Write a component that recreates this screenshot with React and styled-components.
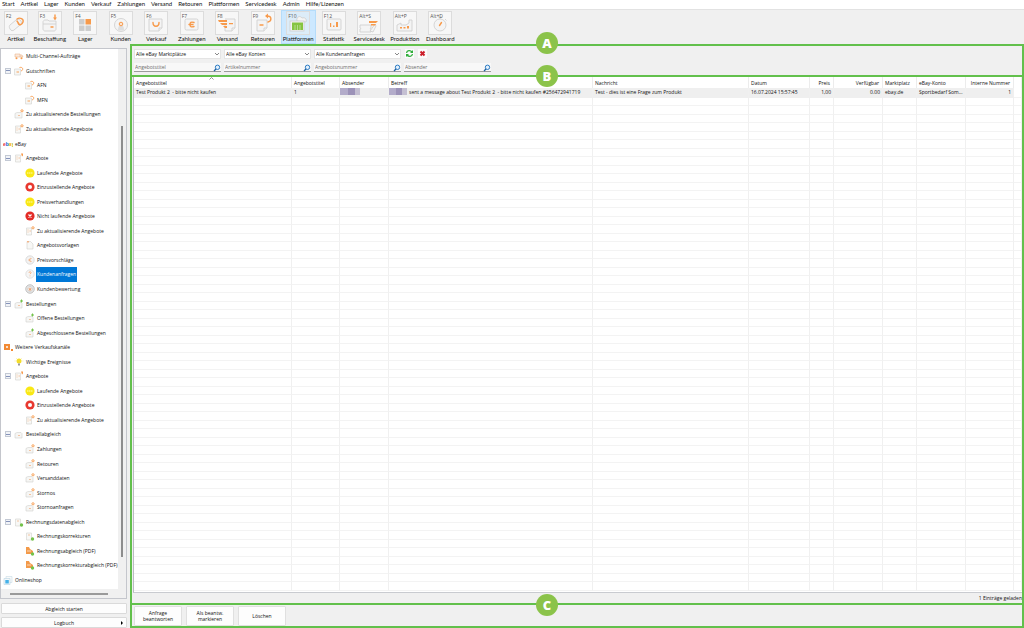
import React, { useState } from 'react';
import styled, { createGlobalStyle, css } from 'styled-components';

const GREEN = '#62c04c';
const ORANGE = '#f79a4b';

const GlobalStyle = createGlobalStyle`
    * {
        box-sizing: border-box;
    }

    html, body, #root {
        height: 100%;
        margin: 0;
    }

    body {
        background-color: #f0f0f0;
        color: #111;
        font-family: 'Open Sans', sans-serif;
        font-size: 5px;
        line-height: 8px;
        overflow: hidden;
    }

    button, input, select {
        font: inherit;
        color: inherit;
        margin: 0;
        padding: 0;
    }
`;

const Window = styled.div`
    display: flex;
    flex-direction: column;
    height: 100vh;
`;

const MenuBar = styled.nav`
    display: flex;
    gap: 6px;
    height: 10px;
    padding-left: 2px;
    background-color: white;
    border-bottom: 1px solid #e2e2e2;
    font-family: Lato, sans-serif;
    font-size: 6px;
`;

const MenuLink = styled.a`
    color: #111;
    text-decoration: none;
`;

const ToolBar = styled.div`
    display: grid;
    grid-template-columns: 32px repeat(12, 1fr);
    width: 458px;
    height: 34px;
    font-family: Lato, sans-serif;
    font-size: 6px;
`;

const ToolButton = styled.button`
    display: flex;
    flex-direction: column;
    align-items: center;
    padding-top: 1px;
    border: none;
    background-color: ${props => props.$active ? '#cce8ff' : 'transparent'};
    box-shadow: ${props => props.$active ? 'inset 0 0 0 1px #b5dcfa' : 'none'};
    color: #111;
    white-space: nowrap;
`;

const ToolIcon = styled.span`
    position: relative;
    width: 24px;
    height: 24px;
    border: 1px solid #dcdcdc;
    background-color: ${props => props.$active ? '#dcecf8' : '#f7f7f7'};

    svg {
        display: block;
    }
`;

const KeyHint = styled.span`
    position: absolute;
    top: 0;
    left: 1px;
    color: #555;
    font-family: 'Open Sans', sans-serif;
    font-size: 5px;
    line-height: 8px;
`;

const Body = styled.div`
    display: flex;
    flex: 1;
    gap: 2px;
    min-height: 0;
`;

const SideBar = styled.aside`
    display: flex;
    flex-direction: column;
    gap: 4px;
    width: 128px;
    padding: 4px 1px 0 0;
`;

const TreePanel = styled.div`
    flex: 1;
    display: grid;
    grid-template-columns: 1fr 8px;
    grid-template-rows: 1fr 9px;
    min-height: 0;
    border: 1px solid #c4c6cc;
`;

const Tree = styled.ul`
    display: flex;
    flex-direction: column;
    min-width: 0;
    margin: 0;
    padding: 0 0 2px;
    list-style: none;
    overflow: hidden;
    background-color: white;
`;

const TreeRow = styled.li`
    display: flex;
    flex: 1;
    align-items: center;
    min-height: 0;
    padding-left: ${props => [2, 4, 24][props.$level]}px;
    white-space: nowrap;
`;

const Expander = styled.button`
    display: flex;
    width: 6px;
    height: 6px;
    margin-right: 3px;
    border: 1px solid #c3c9d4;
    background-color: #f1f3f7;
    align-items: center;
    justify-content: center;
    visibility: ${props => props.$hidden ? 'hidden' : 'visible'};

    &::after {
        content: '';
        width: 4px;
        height: 1px;
        background-color: #8593ba;
    }
`;

const TreeIcon = styled.svg`
    flex: none;
    width: 10px;
    height: 10px;
    margin-right: 1px;
`;

const TreeLabel = styled.a`
    display: flex;
    align-items: center;
    align-self: stretch;
    padding: 0 1px;
    text-decoration: none;
    color: ${props => props.$selected ? 'white' : '#111'};
    background-color: ${props => props.$selected ? '#0078d7' : 'transparent'};
`;

const VerticalTrack = styled.div`
    display: flex;
    justify-content: center;
    padding: 77px 0 32px;

    &::after {
        content: '';
        width: 2px;
        background-color: #8d8d8d;
    }
`;

const HorizontalTrack = styled.div`
    display: flex;
    align-items: center;
    padding: 0 10px 0 9px;

    &::after {
        content: '';
        flex: 1;
        height: 2px;
        background-color: #9a9a9a;
    }
`;

const SideActions = styled.div`
    display: flex;
    flex-direction: column;
    gap: 3px;
    padding-left: 1px;
`;

const SideButton = styled.button`
    position: relative;
    height: 11px;
    border: 1px solid #dadada;
    border-radius: 1px;
    background-color: #fdfdfd;
`;

const SubmenuArrow = styled.svg`
    position: absolute;
    right: 3px;
    top: 3px;
`;

const Main = styled.main`
    display: flex;
    flex: 1;
    flex-direction: column;
    min-width: 0;
    border: 2px solid ${GREEN};
`;

const section = css`
    position: relative;
    border-top: 2px solid ${GREEN};
`;

const FilterSection = styled.form`
    position: relative;
    display: grid;
    grid-template-columns: repeat(4, 87px);
    grid-template-rows: 10px 9px;
    gap: 4px 3px;
    padding: 3px 2px;
`;

const TableSection = styled.section`
    ${section}
    display: flex;
    flex: 1;
    flex-direction: column;
    min-height: 0;
    padding-left: 1px;
`;

const ActionSection = styled.section`
    ${section}
    display: flex;
    gap: 4px;
    padding: 1px 2px 0;
`;

const Badge = styled.span`
    position: absolute;
    z-index: 2;
    top: ${props => props.$top}px;
    left: 404px;
    width: 22px;
    height: 22px;
    border-radius: 50%;
    background-color: #8bc34a;
    color: white;
    font-size: 13px;
    font-weight: 800;
    line-height: 22px;
    text-align: center;
`;

const Field = styled.label`
    position: relative;
    display: flex;

    svg {
        position: absolute;
        right: 0;
        top: 1px;
        pointer-events: none;
    }
`;

const Select = styled.select`
    flex: 1;
    appearance: none;
    padding: 0 1px;
    border: 1px solid #e4e4e4;
    border-radius: 0;
    background-color: white;
`;

const Input = styled.input`
    flex: 1;
    min-width: 0;
    padding: 0 10px 0 1px;
    border: none;
    border-bottom: 1px solid #9c9c9c;
    background-color: #f8f8f8;

    &::placeholder {
        color: #6d6d6d;
        opacity: 1;
    }
`;

const IconButtons = styled.div`
    display: flex;
    gap: 4px;
    padding-left: 1px;
`;

const IconButton = styled.button`
    width: 9px;
    height: 9px;
    border: none;
    background-color: #fbfbfb;

    svg {
        display: block;
    }
`;

const TableFrame = styled.div`
    flex: 1;
    min-height: 0;
    padding-bottom: 1px;
    overflow: hidden;
    background-color: white;
    border-left: 1px solid #b9bbc2;
    border-bottom: 1px solid #c9cbd0;
`;

const Table = styled.table`
    width: 100%;
    height: 100%;
    table-layout: fixed;
    border-collapse: separate;
    border-spacing: 0;
`;

const HeadCell = styled.th`
    position: relative;
    height: 11px;
    padding: 0 3px 0 2px;
    border-right: 1px solid #ececec;
    font-weight: normal;
    text-align: ${props => props.$right ? 'right' : 'left'};
    white-space: nowrap;

    svg {
        position: absolute;
        top: 0;
        left: 48%;
    }
`;

const Cell = styled.td`
    height: 8px;
    padding: 0 2px;
    border-right: 1px solid #f0f0f0;
    border-bottom: 1px solid ${props => props.$filled ? '#efefef' : '#f3f3f3'};
    background-color: ${props => props.$filled ? '#efefef' : 'transparent'};
    text-align: ${props => props.$right ? 'right' : 'left'};
    line-height: 8px;
    white-space: nowrap;
`;

const Redacted = styled.span`
    display: inline-block;
    width: ${props => props.$width}px;
    height: 7px;
    margin: 0 2px 0 -2px;
    vertical-align: top;
    background: linear-gradient(90deg, #b3acca 0 40%, #9c92b8 40% 75%, #c4bfd2 75%);
`;

const Status = styled.p`
    margin: 0;
    height: 10px;
    line-height: 10px;
    text-align: right;
`;

const ActionButton = styled.button`
    width: 48px;
    height: 20px;
    border: 1px solid #e0e0e0;
    border-radius: 1px;
    background-color: #fdfdfd;
    line-height: 6px;
    white-space: pre-line;
`;

const MENU = ['Start', 'Artikel', 'Lager', 'Kunden', 'Verkauf', 'Zahlungen', 'Versand', 'Retouren', 'Plattformen', 'Servicedesk', 'Admin', 'Hilfe/Lizenzen'];

const grey = { fill: '#f4f4f4', stroke: '#cdcdcd', strokeWidth: 0.8 };
const line = { fill: 'none', stroke: ORANGE, strokeWidth: 1.4, strokeLinecap: 'round' };

const TOOLS = [
    { key: 'F2', label: 'Artikel', icon: <><path {...grey} d="M5 13l6-5c1-1 4-1 5 1s0 3-1 4l-6 5c-1 1-3 1-4-1s-1-3 0-4z" /><path {...line} d="M12 7c3-2 7 0 6 3s-4 4-5 1M12 9l2 3" /></> },
    { key: 'F3', label: 'Beschaffung', icon: <><path {...grey} d="M4 10c0-1 1-2 2-2h3l1 1h7v8c0 1-1 2-2 2H6c-1 0-2-1-2-2z" /><path {...grey} d="M4 12h13" /><path {...line} d="M16 3v4M12 15h2" /><path fill={ORANGE} d="M14 5.500h4L16 8z" /></> },
    { key: 'F4', label: 'Lager', icon: <><path fill="#cdcdcd" d="M5 7h5.500v5.500H5zM5 13.500h5.500V19H5zM11.500 13.500H17V19h-5.500z" /><path fill={ORANGE} d="M11.500 7H17v5.500h-5.500z" /></> },
    { key: 'F5', label: 'Kunden', icon: <><circle {...grey} cx="11" cy="13" r="6.500" /><path fill="#dedede" d="M8 18.500c0-4 1-5 3-5s3 1 3 5z" /><circle fill="#fbe3cf" stroke={ORANGE} cx="11" cy="12" r="1.800" /></> },
    { key: 'F6', label: 'Verkauf', icon: <><path {...grey} d="M4 7h13v9l-3 3H4z" /><path {...grey} d="M17 16h-3v3" /><path {...line} d="M8 10.500c0 5 6 5 6 0" /></> },
    { key: 'F7', label: 'Zahlungen', icon: <><rect {...grey} x="4" y="7" width="13" height="11" rx="1.500" /><path {...line} d="M13 10.500c-3-1-4 0-4 2s1 3 4 2M8 12.500h4" /></> },
    { key: 'F8', label: 'Versand', icon: <><path {...grey} d="M9 7h10v9l-3 3H9v-6" /><path {...grey} d="M19 16h-3v3" /><path fill={ORANGE} d="M2 8h9v2H3zM4 11h7v2H6zM7 14h4v2H9zM13 11h4v1.300h-4z" /></> },
    { key: 'F9', label: 'Retouren', icon: <><path {...grey} d="M5 8h10v8l-3 3H5z" /><path {...grey} d="M15 16h-3v3" /><path {...line} d="M15 4c5 0 5 5 1 6M8 13h3" /><path fill={ORANGE} d="M16 1.500v5L13 4z" /></> },
    { key: 'F10', label: 'Plattformen', active: true, icon: <><path {...grey} d="M10 9c-1-4 3-6 5-3 3-1 5 1 4 4z" /><rect {...grey} x="3" y="9" width="14" height="10" /><path fill="#86c440" d="M5 10.500h11V18H5z" /><path stroke="#e7f4d9" strokeWidth="0.500" d="M8 13v5M10.500 13v5M13 13v5" /></> },
    { key: 'F12', label: 'Statistik', icon: <><rect {...grey} x="4" y="7" width="14" height="11" rx="1" /><path fill={ORANGE} d="M7 11h1.200v4H7zM10 13.500h1.500V15H10zM13 10h2v5h-2z" /></> },
    { key: 'Alt+S', label: 'Servicedesk', icon: <><path {...grey} d="M2 13h11v3c-1 0-1 1 0 1v3H2v-3c1 0 1-1 0-1z" /><path {...grey} d="M12 19l5-7 1 2-3 6z" /><path fill={ORANGE} d="M11 9h9l-2 2h-7zM13 12h5l-1 1.500h-4z" /></> },
    { key: 'Alt+P', label: 'Produktion', icon: <><path {...grey} d="M3 19v-6l4-2v2h5l3-2V8h3v11z" /><path fill={ORANGE} d="M6 15h2v1.500H6zM9.500 15h2v1.500h-2zM13 14h2v2.500h-2z" /></> },
    { key: 'Alt+D', label: 'Dashboard', icon: <><circle {...grey} cx="11" cy="13" r="6" /><path {...grey} d="M9 5h4M11 5v2M16 7l1.500 1.500" /><path {...line} d="M10.500 13.500l2-3" /></> },
];

const box = <path fill="#f6f6f4" stroke="#d2d2ce" strokeWidth="0.600" d="M1 4.500l2-1h4l1 1v4.500H1z" />;
const sheet = <path fill="#f8f8f6" stroke="#d2d2ce" strokeWidth="0.600" d="M1.500 2h5v7h-5z" />;
const orangeDot = <circle fill="none" stroke={ORANGE} strokeWidth="0.900" cx="8" cy="1.800" r="1.100" />;
const listLines = <path stroke="#f2b58a" strokeWidth="0.800" d="M2.500 4h1M2.500 6h1M4.500 5h1.500" />;
const greenDot = <circle fill="#74c24b" cx="7.500" cy="8" r="1.700" />;
const parcelMark = <path stroke="#f2b58a" strokeWidth="0.800" d="M4 6.500h2" />;

const ICONS = {
    cart: <><path fill="#fbe9dc" stroke="#eab58e" strokeWidth="0.600" d="M1 3h5v3H1zM6 4h2l1 2H6" /><circle cx="2.500" cy="7.200" r="1" fill={ORANGE} /><circle cx="7.500" cy="7.200" r="1" fill={ORANGE} /></>,
    credit: <><path fill="#f6f6f4" stroke="#d2d2ce" strokeWidth="0.600" d="M.5 3h6v6h-6z" /><path fill="none" stroke={ORANGE} strokeWidth="0.900" d="M5.500 1.500c4-1 4 3 1.500 3.500M2.500 6h2.500" /></>,
    orderUpdate: <>{box}{parcelMark}{orangeDot}</>,
    listUpdate: <>{sheet}{listLines}{orangeDot}</>,
    list: <>{sheet}{listLines}<path fill={ORANGE} d="M7 .5h2v2l-1 1z" /></>,
    running: <><circle cx="5" cy="5" r="4.600" fill="#f9e814" /><path stroke="#fff9b0" strokeWidth="1.200" strokeDasharray="1.500 .500" d="M2 5h6" /></>,
    pending: <><circle cx="5" cy="5" r="4.600" fill="#e8382f" /><circle cx="5" cy="5" r="2" fill="white" /></>,
    stopped: <><circle cx="5" cy="5" r="4.600" fill="#e32b26" /><path stroke="white" strokeWidth="1.200" d="M3.500 3.500l3 3M6.500 3.500l-3 3" /></>,
    template: <><path fill="#f8f8f6" stroke="#d2d2ce" strokeWidth="0.600" d="M2 1.500h3.500L8 4v5H2z" /><path fill="#f2b58a" d="M2 1h2v1.500H2z" /></>,
    price: <><circle cx="5" cy="5" r="4.200" fill="#f3f3f3" stroke="#c9c9c9" strokeWidth="0.600" /><path fill="none" stroke="#f2a670" strokeWidth="0.800" d="M6.500 3.500c-3-1-3 4 0 3M3.500 5h2.500" /></>,
    question: <><circle cx="5" cy="5" r="4.200" fill="#f6f6f6" stroke="#d2d2d2" strokeWidth="0.600" /><path fill="none" stroke="#f2a670" strokeWidth="0.800" d="M4 4c0-2 2.500-1.500 2 0L5 5.200M5 6.500v.8" /></>,
    rating: <><circle cx="5" cy="5" r="4.200" fill="#f3f3f3" stroke="#8f8f8f" strokeWidth="0.600" /><circle cx="5" cy="5" r="2.600" fill="none" stroke="#b9b9b9" strokeWidth="0.500" /><path fill="#e8a57a" d="M5 3l.6 1.400 1.400.1-1 1 .3 1.500L5 6.200 3.700 7 4 5.500l-1-1 1.400-.1z" /></>,
    orderNew: <>{box}{parcelMark}<path stroke="#74c24b" strokeWidth="1" d="M7.500 .5v3M6 2h3" /></>,
    market: <><path fill="#f28a34" d="M1 2h6v6H1z" /><path fill="#fbe0cb" d="M3 4h2v2H3z" /><path fill="#f28a34" d="M8 7h2v2H8z" /></>,
    bulb: <><circle cx="5" cy="4" r="2.500" fill="#f3dc2b" /><path fill="#9a9a9a" d="M4 6.500h2v2H4z" /><path stroke="#f6ea85" strokeWidth="0.600" d="M.5 4h1.200M8.300 4h1.200M2 1l.8.8M8 1l-.8.8" /></>,
    parcel: <>{box}{parcelMark}</>,
    invoice: <>{sheet}<path stroke="#f2b58a" strokeWidth="0.800" d="M3 4h2" />{greenDot}</>,
    pdf: <><path fill="#f39a4a" d="M1 1h3l1 2 3 2v3H1z" /><path stroke="#fff" strokeWidth="0.600" d="M2 5h4" />{greenDot}</>,
    shop: <><path fill="#fafafa" stroke="#c8dbe6" strokeWidth="0.600" d="M3 1.500h6v6H3z" /><path fill="#f3f8fb" stroke="#b8d3e2" strokeWidth="0.600" d="M1 3.500h6v6H1z" /><path fill="#45b1e8" d="M2.300 5h3.500v3.500H2.300z" /></>,
};

const TREE = [
    [1, 'cart', 'Multi-Channel-Aufträge'],
    [1, 'credit', 'Gutschriften', true],
    [2, 'credit', 'AFN'],
    [2, 'credit', 'MFN'],
    [1, 'orderUpdate', 'Zu aktualisierende Bestellungen'],
    [1, 'listUpdate', 'Zu aktualisierende Angebote'],
    [0, 'ebay', 'eBay'],
    [1, 'list', 'Angebote', true],
    [2, 'running', 'Laufende Angebote'],
    [2, 'pending', 'Einzustellende Angebote'],
    [2, 'running', 'Preisverhandlungen'],
    [2, 'stopped', 'Nicht laufende Angebote'],
    [2, 'listUpdate', 'Zu aktualisierende Angebote'],
    [2, 'template', 'Angebotsvorlagen'],
    [2, 'price', 'Preisvorschläge'],
    [2, 'question', 'Kundenanfragen'],
    [2, 'rating', 'Kundenbewertung'],
    [1, 'orderNew', 'Bestellungen', true],
    [2, 'orderNew', 'Offene Bestellungen'],
    [2, 'orderNew', 'Abgeschlossene Bestellungen'],
    [0, 'market', 'Weitere Verkaufskanäle'],
    [1, 'bulb', 'Wichtige Ereignisse'],
    [1, 'list', 'Angebote', true],
    [2, 'running', 'Laufende Angebote'],
    [2, 'pending', 'Einzustellende Angebote'],
    [2, 'listUpdate', 'Zu aktualisierende Angebote'],
    [1, 'parcel', 'Bestellabgleich', true],
    [2, 'orderUpdate', 'Zahlungen'],
    [2, 'orderUpdate', 'Retouren'],
    [2, 'orderUpdate', 'Versanddaten'],
    [2, 'orderUpdate', 'Stornos'],
    [2, 'orderUpdate', 'Stornoanfragen'],
    [1, 'invoice', 'Rechnungsdatenabgleich', true],
    [2, 'invoice', 'Rechnungskorrekturen'],
    [2, 'pdf', 'Rechnungsabgleich (PDF)'],
    [2, 'pdf', 'Rechnungskorrekturabgleich (PDF)'],
    [0, 'shop', 'Onlineshop'],
];

const COLUMNS = [
    { label: 'Angebotstitel', width: 158, sorted: true },
    { label: 'Angebotstitel', width: 48 },
    { label: 'Absender', width: 49 },
    { label: 'Betreff', width: 204 },
    { label: 'Nachricht' },
    { label: 'Datum', width: 61 },
    { label: 'Preis', width: 24, right: true },
    { label: 'Verfügbar', width: 49, right: true },
    { label: 'Marktplatz', width: 34 },
    { label: 'eBay-Konto', width: 49 },
    { label: 'Interne Nummer', width: 48, right: true },
    { label: '', width: 8 },
];

const ROW = [
    'Test Produkt 2 \u00a0- bitte nicht kaufen',
    '1',
    <Redacted $width={20} />,
    <><Redacted $width={18} />sent a message about Test Produkt 2 {'\u00a0'}- bitte nicht kaufen #256472941719</>,
    'Test - dies ist eine Frage zum Produkt',
    '16.07.2024 15:57:45',
    '1,00',
    '0.00',
    'ebay.de',
    'Sportbedarf Som...',
    '1',
    '',
];

const EMPTY_ROWS = 58;

const EbayLogo = () => (
    <TreeIcon viewBox="0 0 10 10" aria-hidden="true">
        <text y="7" fontSize="5" fontWeight="bold" fontFamily="Liberation Sans, sans-serif">
            <tspan fill="#e53238">e</tspan><tspan fill="#0064d2">b</tspan><tspan fill="#f5af02">a</tspan><tspan fill="#86b817">y</tspan>
        </text>
    </TreeIcon>
);

const SearchIcon = () => (
    <svg width="8" height="8" viewBox="0 0 8 8">
        <circle cx="4.500" cy="3.300" r="2.200" fill="#e3f0fb" stroke="#2b7bc4" strokeWidth="1" />
        <path stroke="#1e5f9f" strokeWidth="1.300" d="M3 5L1 7" />
    </svg>
);

const Dropdown = ({ label }) => (
    <Field>
        <Select aria-label={label}>
            <option>{label}</option>
        </Select>
        <svg width="7" height="8" viewBox="0 0 7 8">
            <path fill="none" stroke="#555" strokeWidth="0.700" d="M1 3l2 2 2-2" />
        </svg>
    </Field>
);

const SearchField = ({ label }) => (
    <Field>
        <Input type="text" placeholder={label} aria-label={label} />
        <SearchIcon />
    </Field>
);

const App = () => {
    const [selected, setSelected] = useState('Kundenanfragen');

    return (
        <Window>
            <GlobalStyle />
            <MenuBar>
                {MENU.map(item => <MenuLink key={item} href="#">{item}</MenuLink>)}
            </MenuBar>
            <ToolBar>
                {TOOLS.map(tool => (
                    <ToolButton key={tool.key} type="button" $active={tool.active}>
                        <ToolIcon $active={tool.active}>
                            <KeyHint>{tool.key}</KeyHint>
                            <svg width="22" height="22" viewBox="0 0 22 22">{tool.icon}</svg>
                        </ToolIcon>
                        {tool.label}
                    </ToolButton>
                ))}
            </ToolBar>
            <Body>
                <SideBar>
                    <TreePanel>
                        <Tree>
                            {TREE.map(([level, icon, label, open], index) => (
                                <TreeRow key={index} $level={level}>
                                    {level === 1 && <Expander type="button" aria-label={label} $hidden={!open} />}
                                    {icon === 'ebay'
                                        ? <EbayLogo />
                                        : <TreeIcon viewBox="0 0 10 10">{ICONS[icon]}</TreeIcon>}
                                    <TreeLabel href="#" $selected={label === selected} onClick={() => setSelected(label)}>
                                        {label}
                                    </TreeLabel>
                                </TreeRow>
                            ))}
                        </Tree>
                        <VerticalTrack />
                        <HorizontalTrack />
                    </TreePanel>
                    <SideActions>
                        <SideButton type="button">Abgleich starten</SideButton>
                        <SideButton type="button">
                            Logbuch
                            <SubmenuArrow width="2" height="4" viewBox="0 0 2 4"><path d="M0 0l2 2-2 2z" /></SubmenuArrow>
                        </SideButton>
                    </SideActions>
                </SideBar>
                <Main>
                    <FilterSection>
                        <Badge $top={-14}>A</Badge>
                        <Dropdown label="Alle eBay Marktplätze" />
                        <Dropdown label="Alle eBay Konten" />
                        <Dropdown label="Alle Kundenanfragen" />
                        <IconButtons>
                            <IconButton type="button" aria-label="Aktualisieren">
                                <svg width="9" height="9" viewBox="0 0 9 9">
                                    <path fill="none" stroke="#2fae3a" strokeWidth="1.300" d="M1.500 4c.5-3 4-3 5.500-1M7.500 5c-.5 3-4 3-5.500 1" />
                                    <path fill="#2fae3a" d="M8 1v3H5zM1 8V5h3z" />
                                </svg>
                            </IconButton>
                            <IconButton type="button" aria-label="Filter löschen">
                                <svg width="9" height="9" viewBox="0 0 9 9">
                                    <path stroke="#cc1f2b" strokeWidth="2" d="M2.500 2.500l4 4M6.500 2.500l-4 4" />
                                </svg>
                            </IconButton>
                        </IconButtons>
                        <SearchField label="Angebotstitel" />
                        <SearchField label="Artikelnummer" />
                        <SearchField label="Angebotsnummer" />
                        <SearchField label="Absender" />
                    </FilterSection>
                    <TableSection>
                        <Badge $top={-12}>B</Badge>
                        <TableFrame>
                            <Table>
                                <colgroup>
                                    {COLUMNS.map((column, index) => <col key={index} width={column.width} />)}
                                </colgroup>
                                <thead>
                                    <tr>
                                        {COLUMNS.map((column, index) => (
                                            <HeadCell key={index} $right={column.right}>
                                                {column.label}
                                                {column.sorted && (
                                                    <svg width="5" height="3" viewBox="0 0 5 3">
                                                        <path fill="none" stroke="#666" strokeWidth="0.700" d="M.5 2.500l2-2 2 2" />
                                                    </svg>
                                                )}
                                            </HeadCell>
                                        ))}
                                    </tr>
                                </thead>
                                <tbody>
                                    <tr>
                                        {ROW.map((value, index) => (
                                            <Cell key={index} $filled={index < ROW.length - 1} $right={COLUMNS[index].right}>{value}</Cell>
                                        ))}
                                    </tr>
                                    {Array.from({ length: EMPTY_ROWS }, (_, row) => (
                                        <tr key={row}>
                                            {COLUMNS.map((column, index) => <Cell key={index} />)}
                                        </tr>
                                    ))}
                                </tbody>
                            </Table>
                        </TableFrame>
                        <Status>1 Einträge geladen</Status>
                    </TableSection>
                    <ActionSection>
                        <Badge $top={-11}>C</Badge>
                        <ActionButton type="button">{'Anfrage\nbeantworten'}</ActionButton>
                        <ActionButton type="button">{'Als beantw.\nmarkieren'}</ActionButton>
                        <ActionButton type="button">Löschen</ActionButton>
                    </ActionSection>
                </Main>
            </Body>
        </Window>
    );
};

export default App;
